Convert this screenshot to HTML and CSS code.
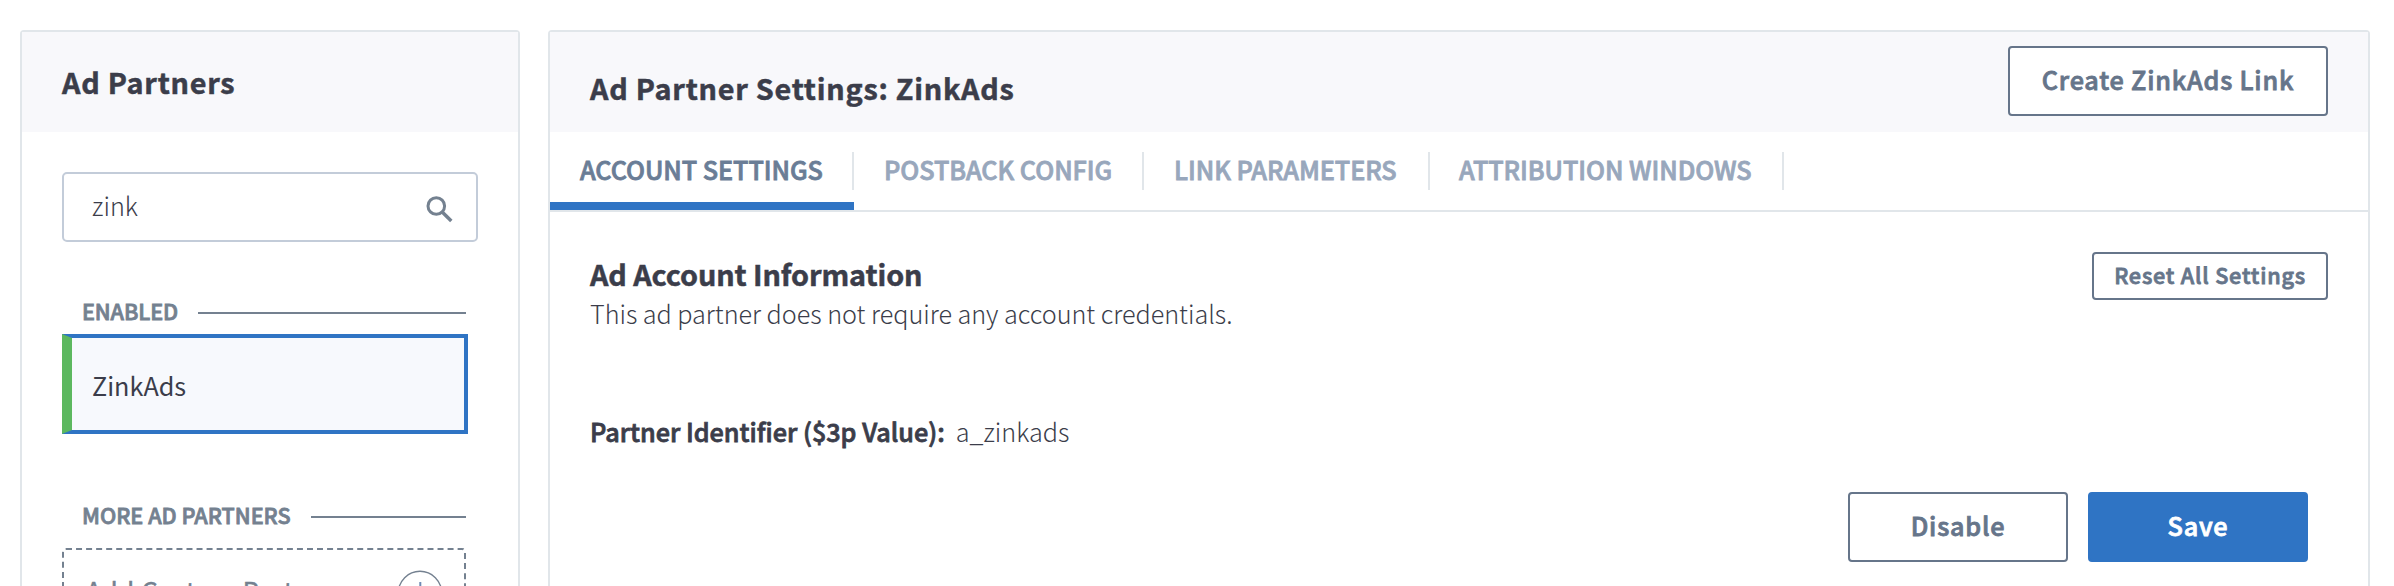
FILE: index.html
```html
<!DOCTYPE html>
<html lang="en">
<head>
<meta charset="utf-8">
<title>Ad Partner Settings</title>
<link rel="stylesheet" href="styles.css">
</head>
<body>
<main class="layout">
  <aside class="panel sidebar">
    <header class="panel-header"><h2 class="title">Ad Partners</h2></header>
    <div class="sidebar-body">
      <div class="search">
        <span class="search-text">zink</span>
        <svg class="search-icon" width="28" height="28" viewBox="0 0 28 28" fill="none" stroke="#748190">
          <circle cx="11.3" cy="11" r="8.3" stroke-width="3"/>
          <path d="M17.2 17L26.3 26" stroke-width="3.5"/>
        </svg>
      </div>
      <div class="group-head group-enabled"><span class="group-label">ENABLED</span><span class="rule"></span></div>
      <div class="partner">ZinkAds</div>
      <div class="group-head group-more"><span class="group-label">MORE AD PARTNERS</span><span class="rule"></span></div>
      <div class="custom">
        <span class="custom-label">Add Custom Partner</span>
        <svg class="plus" width="46" height="46" viewBox="0 0 46 46" fill="none">
          <circle cx="23" cy="23" r="21.7" stroke="#748190" stroke-width="1.4"/>
          <path d="M23.3 12V34M12 23H34" stroke="#6f8bb5" stroke-width="2"/>
        </svg>
      </div>
    </div>
  </aside>
  <section class="panel settings">
    <header class="panel-header settings-header">
      <h2 class="title settings-title">Ad Partner Settings: ZinkAds</h2>
      <button class="btn btn-create">Create ZinkAds Link</button>
    </header>
    <nav class="tabs">
      <a class="tab active"><span class="tab-label">ACCOUNT SETTINGS</span></a>
      <a class="tab tab-postback"><span class="tab-label">POSTBACK CONFIG</span></a>
      <a class="tab tab-params"><span class="tab-label">LINK PARAMETERS</span></a>
      <a class="tab tab-windows"><span class="tab-label">ATTRIBUTION WINDOWS</span></a>
    </nav>
    <div class="settings-body">
      <div class="info-row">
        <div class="info">
          <h3 class="info-title">Ad Account Information</h3>
          <p class="info-text">This ad partner does not require any account credentials.</p>
        </div>
        <button class="btn btn-reset">Reset All Settings</button>
      </div>
      <p class="identifier"><span class="identifier-label">Partner Identifier ($3p Value):</span><span>a_zinkads</span></p>
      <div class="actions">
        <button class="btn btn-action">Disable</button>
        <button class="btn btn-action btn-primary">Save</button>
      </div>
    </div>
  </section>
</main>
</body>
</html>
```
FILE: styles.css
```css
* { box-sizing: border-box; }
html { overflow: hidden; }
body {
  margin: 0;
  height: 586px;
  overflow: hidden;
  background: #fff;
  color: #3b3d4a;
  font-family: "Noto Sans CJK JP", sans-serif;
  font-size: 25.2px;
  font-weight: 300;
}
h2, h3, p { margin: 0; }
.layout {
  display: flex;
  gap: 28px;
  padding: 30px 24px 0 20px;
  height: 586px;
}
.panel { border: 2px solid #e1e6ea; border-bottom: 0; border-radius: 4px 4px 0 0; }
.sidebar { flex: 0 0 500px; }
.settings { flex: 1; min-width: 0; }
.panel-header {
  display: flex;
  align-items: center;
  height: 100px;
  padding: 0 40px;
  background: #f8f8fb;
}
.title {
  font-size: 28.8px;
  line-height: 40px;
  font-weight: 700;
  letter-spacing: .75px;
  padding-bottom: 1px;
  -webkit-text-stroke: .5px currentColor;
}
.sidebar-body { padding: 40px; }
.search {
  display: flex;
  justify-content: space-between;
  align-items: center;
  height: 70px;
  padding: 0 23px 0 28px;
  border: 2px solid #c3ccd9;
  border-radius: 5px;
}
.search-text { line-height: 30px; padding-bottom: 4px; }
.search-icon { margin-top: 4px; }
.group-head {
  display: flex;
  align-items: center;
  gap: 20px;
  height: 30px;
  padding: 0 12px 0 20px;
}
.group-enabled { margin-top: 56px; }
.group-more { margin-top: 68px; }
.group-label {
  font-size: 21.6px;
  line-height: 30px;
  font-weight: 500;
  color: #748190;
  padding-bottom: 5px;
  -webkit-text-stroke: .8px currentColor;
}
.group-enabled .group-label { letter-spacing: -.1px; }
.rule { flex: 1; height: 2px; background: #748190; }
.partner {
  width: 406px;
  height: 100px;
  margin-top: 6px;
  padding-left: 20px;
  border: 4px solid #2f74c4;
  border-left: 10px solid #5cb85f;
  background: #f7f9fd;
  font-weight: 400;
  line-height: 94px;
}
.custom {
  display: flex;
  align-items: center;
  justify-content: space-between;
  width: 404px;
  height: 90px;
  margin-top: 16px;
  padding: 0 21px 0 22px;
  border: 2px dashed #748190;
  border-radius: 4px;
}
.custom-label {
  font-weight: 400;
  color: #748190;
  line-height: 30px;
  padding-bottom: 6px;
  letter-spacing: .8px;
  -webkit-text-stroke: .5px currentColor;
}
.settings-header { justify-content: space-between; padding-left: 40px; }
.settings-title { padding: 11px 0 0; }
.btn {
  display: flex;
  justify-content: center;
  align-items: center;
  border: 2px solid #66758a;
  border-radius: 4px;
  padding: 0 0 4px;
  background: #fff;
  color: #66758a;
  font-family: inherit;
  font-size: 25.2px;
  font-weight: 500;
  line-height: 30px;
  letter-spacing: .8px;
  -webkit-text-stroke: .8px currentColor;
}
.btn-create { width: 320px; height: 70px; margin-bottom: 2px; }
.tabs {
  display: flex;
  height: 80px;
  border-bottom: 2px solid #e1e6ea;
}
.tab {
  width: 304px;
  height: 78px;
  padding-top: 20px;
  color: #98a7bc;
  font-weight: 500;
  -webkit-text-stroke: .8px currentColor;
}
.tab-label {
  display: block;
  height: 38px;
  padding-left: 30px;
  border-right: 2px solid #e1e6ea;
  line-height: 34px;
  letter-spacing: -.05px;
  white-space: nowrap;
}
.active { color: #6a7d96; border-bottom: 8px solid #2f74c4; }
.tab-postback { width: 290px; }
.tab-params { width: 286px; }
.tab-windows { width: 354px; }
.tab-windows .tab-label { padding-left: 29px; }
.settings-body { padding: 40px; }
.info-row { display: flex; justify-content: space-between; align-items: flex-start; }
.info-title {
  font-size: 28.8px;
  line-height: 44px;
  font-weight: 700;
  letter-spacing: -.1px;
  -webkit-text-stroke: .5px currentColor;
}
.info-text { line-height: 34px; padding-bottom: 2px; letter-spacing: -.03px; }
.btn-reset { width: 236px; height: 48px; font-size: 21.6px; padding-bottom: 2px; }
.identifier { display: flex; gap: 11px; margin-top: 80px; line-height: 38px; }
.identifier-label { font-weight: 500; -webkit-text-stroke: .8px currentColor; }
.actions {
  display: flex;
  justify-content: flex-end;
  gap: 20px;
  margin-top: 42px;
  padding-right: 20px;
}
.btn-action { width: 220px; height: 70px; }
.btn-primary { background: #2f74c4; border-color: #2f74c4; color: #fff; }
```
